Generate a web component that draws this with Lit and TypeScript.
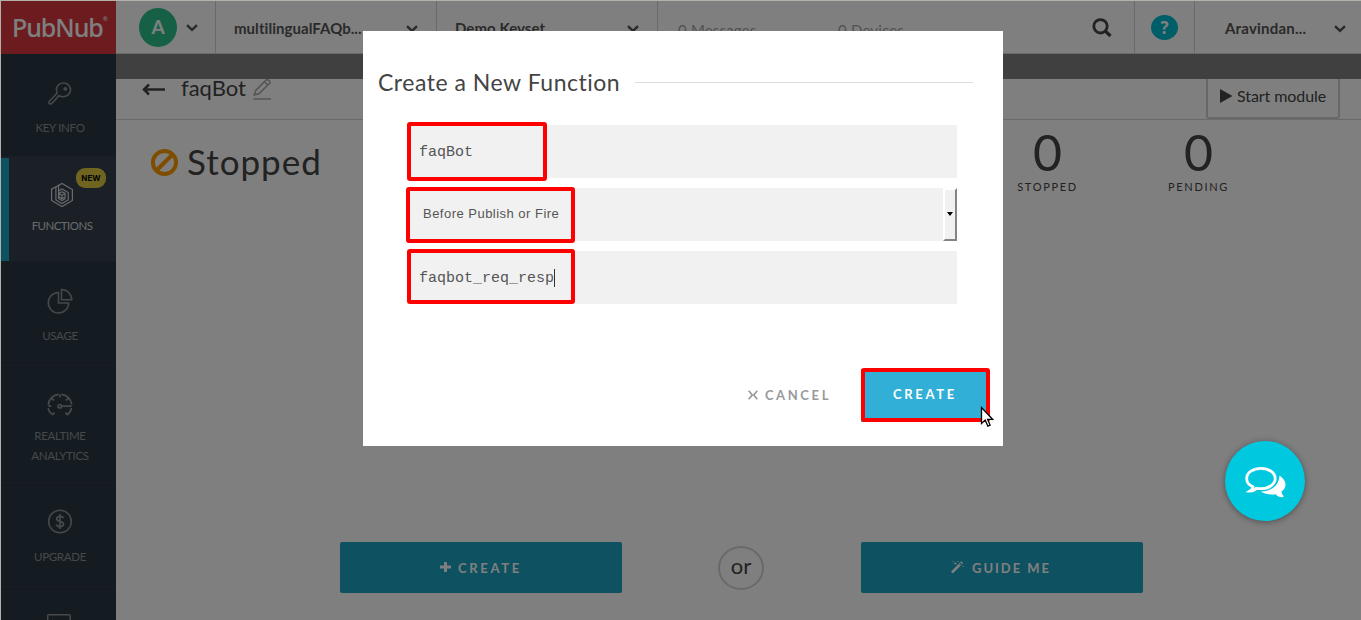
import { LitElement, html, svg, css } from "lit";
import { customElement, property } from "lit/decorators.js";

const icons: Record<string, unknown> = {
  key: svg`<svg width="26" height="26" viewBox="0 0 26 26" fill="none" stroke="currentColor" stroke-width="1.6" stroke-linejoin="round"><path d="M12 14.600 5 22.300c-.8.900-3.500 1.200-3.100-.9l.1-.7L10.100 12C8.800 8.600 9.600 5.600 11.800 3.700c3.200-2.500 7.700-2.100 10.100.7 2.400 2.900 2.100 7.100-.6 9.300-2.500 2-6.400 2.500-9.300.9z"/><circle cx="18.300" cy="7.800" r="1.100" fill="currentColor"/></svg>`,
  functions: svg`<svg width="26" height="26" viewBox="0 0 26 26" fill="none" stroke="currentColor" stroke-width="1.200"><path d="M9.600 3.300 2.600 7.200v11.300L13 24.500l10.400-6v-11L13 1.400 9.600 3.400v5.800"/><path d="M6.900 5v12.900L13 21.500l6.200-3.600v-7.400L13 7l-3.400 2v7.500L13 18.500l3.800-2.200"/><path d="M13 9.700 9.900 11.400v3.500L13 16.700l3.100-1.800v-3.500zM9.900 11.400 13 13.200l3.100-1.800M13 13.200v3.500"/></svg>`,
  usage: svg`<svg width="26" height="26" viewBox="0 0 26 26" fill="none" stroke="currentColor" stroke-width="1.500"><path d="M11.500 4.600A10.200 10.200 0 1 0 21.700 15H11.500z"/><path d="M14.500 1.500v10.200h10.200A10.200 10.200 0 0 0 14.500 1.500z"/></svg>`,
  gauge: svg`<svg width="26" height="26" viewBox="0 0 26 26" fill="none" stroke="currentColor" stroke-width="1.700"><path d="M5.800 22.700 7.500 20.400M5.800 22.700C3 21 1.500 18.500 1.300 16M1.300 13C1.700 7.300 6 2.800 11.700 2.300M14.300 2.300C20 2.800 24.200 7.200 24.700 12.500M24.500 16c-.5 3-2 5.100-4.300 6.700L18.500 20.400M1.300 14.200h3M13 2.500v3M4.800 6.300 7 8.500M21.200 6.300 19 8.500M14.500 14.200h10.200"/><circle cx="12.800" cy="14.200" r="1.700"/></svg>`,
  dollar: svg`<svg width="26" height="26" viewBox="0 0 26 26" fill="none" stroke="currentColor" stroke-width="1.500"><circle cx="13" cy="12.500" r="11.300"/><path d="M16.500 9.200C16 8 14.800 7.300 13 7.300c-2 0-3.300.9-3.300 2.500 0 3.700 6.800 1.700 6.800 5.300 0 1.600-1.500 2.600-3.500 2.600s-3.400-.9-3.700-2.400M13 5.100v14.800" stroke-width="1.700"/></svg>`,
  terminal: svg`<svg width="26" height="26" viewBox="0 0 26 26" fill="none" stroke="currentColor" stroke-width="1.500"><rect x=".7" y="1.700" width="22.500" height="20" rx="1"/><path d="m5 7 4 3.500L5 14"/></svg>`,
  chevron: svg`<svg width="12" height="8" viewBox="0 0 12 8" fill="none" stroke="currentColor" stroke-width="2.500"><path d="m1 1.200 5 4.700 5-4.700"/></svg>`,
  search: svg`<svg width="20" height="20" viewBox="0 0 20 20" fill="none" stroke="currentColor" stroke-width="2.800"><circle cx="8.500" cy="8.300" r="6.700"/><path d="m13.200 13 5.300 5" stroke-width="3.300"/></svg>`,
  back: svg`<svg width="24" height="14" viewBox="0 0 24 14" fill="none" stroke="currentColor" stroke-width="2.500"><path d="M23 7.500H2M7 2.500 2 7.500 7 12.500"/></svg>`,
  pencil: svg`<svg width="19" height="22" viewBox="0 0 19 22" fill="none" stroke="currentColor" stroke-width="1.500"><path d="M1.200 16 2.700 11.500 13.200.9c1.200-.9 4.800 1.500 3.700 3.200L5.900 14.800zM11.400 2.700l3.700 3.600"/><path d="M.5 20h17.500"/></svg>`,
  ban: svg`<svg width="28" height="28" viewBox="0 0 28 28" fill="none" stroke="currentColor" stroke-width="4"><circle cx="14.500" cy="13.500" r="11.600"/><path d="M6.500 21.500 22.500 5.500"/></svg>`,
  play: svg`<svg width="13" height="14" viewBox="0 0 13 14" fill="currentColor"><path d="M0 0 12.500 7 0 14z"/></svg>`,
  plus: svg`<svg width="11" height="11" viewBox="0 0 11 11" fill="currentColor"><path d="M4 0h3v3.500h4v3H7V10H4V6.500H0v-3h4z"/></svg>`,
  wand: svg`<svg width="13" height="13" viewBox="0 0 13 13" fill="currentColor"><path d="M.3 10.200 9.800.7c.6-.6 2.600 1.300 2 1.900L2.400 12.100c-.7.700-2.800-1.200-2.100-1.900z"/><path d="m8.300 3.600.8.800 1.800-1.800-.8-.8z" fill="#1ca2c2"/><path d="M4.300.7l.5 1.200 1.200.5-1.200.5-.5 1.200-.5-1.200-1.200-.5 1.200-.5zM1.500.3h1v1h-1zM6.500.1h1v1h-1zM11.700 5h1v1h-1z"/></svg>`,
  cross: svg`<svg width="10" height="10" viewBox="0 0 10 10" fill="none" stroke="currentColor" stroke-width="1.700"><path d="M.7.700 3.700 4.300v1.400L.7 9.300M9.300.7 6.300 4.300v1.400l3 3.600M3.500 5h3"/></svg>`,
  chats: svg`<svg width="42" height="34" viewBox="0 0 42 34"><path d="M35.500 9.500c3.600 2.500 6 5.500 6 9 0 3-1.500 5.400-4.100 7 .4 2.200 1.300 3.400 2.300 4.700-1 2.500-6.300.3-8-2-5.500.9-11-.2-15-2.700 11-.3 18.600-6.500 18.800-16z" fill="#fff"/><path d="M17 2.300C9.300 2.300 2.700 6.700 2.700 12.500c0 3.800 2.500 6.800 6.300 8.400-.3 1.700-1.500 3-3.300 4.200 2.300.1 5-1 6.500-2.800 1.500.3 3 .4 4.800.4 7.900 0 14.200-4.500 14.200-10.200S24.900 2.300 17 2.300z" fill="none" stroke="#fff" stroke-width="2.800"/></svg>`,
};

@customElement("side-item")
class SideItem extends LitElement {
  @property() icon = "";
  @property() label = "";
  @property({ type: Boolean, reflect: true }) active = false;
  @property({ type: Boolean, reflect: true }) first = false;
  @property({ type: Boolean, reflect: true }) tall = false;
  static styles = css`
    :host { display: block; height: 104px; flex: none; box-sizing: border-box; border-bottom: 1px solid #303d48; color: #8e9193; text-align: center; font-size: 11.500px; line-height: 20px; padding: 27px 0 0 3px; position: relative; }
    :host([first]) { height: 103px; }
    :host([tall]) { height: 117px; }
    :host([active]) { height: 105px; background: #363f4d; padding: 25px 0 0 7px; color: #d4d6d8; }
    :host([active])::before { content: ""; position: absolute; left: 0; top: 1px; bottom: 0; width: 8px; background: #1ca2c2; }
    svg { display: block; margin: 0 auto; }
    .label { margin-top: 12px; white-space: pre-line; letter-spacing: -0.300px; }
    :host(:not([active]):not([first]):not([tall])) { padding-top: 26px; }
    :host([first]) .label { margin-top: 11px; }
    :host([tall]) { padding-top: 26px; }
    :host([tall]) .label { margin-top: 8px; }
    :host([active]) .label { margin-top: 8px; letter-spacing: -0.550px; }
    .tag { position: absolute; right: 10px; top: 11px; width: 30px; height: 20px; border-radius: 9px; background: #dfcb42; color: #000; font: 700 8px/20px Inter, sans-serif; }
  `;
  render() {
    return html`${icons[this.icon]}<div class="label">${this.label}</div>
      ${this.active ? html`<span class="tag">NEW</span>` : ""}`;
  }
}

@customElement("app-root")
class AppRoot extends LitElement {
  static styles = css`
    :host { display: block; position: relative; box-sizing: border-box; width: 1361px; height: 620px; overflow: hidden; padding: 1px 0 0 1px; background: #b4b1aa; font-family: Lato, "Open Sans", sans-serif; color: #444; }
    * { box-sizing: border-box; }
    svg { display: block; flex: none; }
    .page { display: grid; grid-template-columns: 115px 1fr; grid-template-rows: 53px 1fr; height: 619px; background: #fff; overflow: hidden; }
    .logo { background: #d8363e; color: #fff; display: flex; padding: 10px 0 0 11px; font: 500 25px/32px "Noto Sans", sans-serif; letter-spacing: -1.050px; white-space: nowrap; }
    .logo sup { font-size: 6px; line-height: 17px; letter-spacing: 0; }
    .side { background: #293843; display: flex; flex-direction: column; overflow: hidden; }
    .top { display: flex; border-bottom: 1px solid #d4d4d4; color: #555; font-size: 15px; font-weight: 700; letter-spacing: 0.050px; }
    .cell { display: flex; align-items: center; border-right: 1px solid #d4d4d4; white-space: nowrap; }
    .cell .grow { flex: 1; }
    .cell svg { color: #555; margin-top: 2px; }
    .c1 { width: 100px; padding-left: 23px; gap: 9px; }
    .avatar { width: 38px; height: 39px; border-radius: 50%; background: #2dc38d; color: #fff; font: 700 19px/38px Lato, sans-serif; text-align: center; }
    .c1 svg { margin-top: 1px; }
    .c2, .c3 { width: 221px; padding: 2px 18px 0; }
    .c4 { width: 477px; font-weight: 400; color: #a5a5a5; padding: 6px 22px 0 20px; letter-spacing: 0.180px; }
    .c4 span { width: 160px; }
    .c4 svg { color: #444; margin: -5px 0 0 auto; }
    .c5 { width: 60px; justify-content: center; }
    .help { width: 27px; height: 25px; border-radius: 50%; background: #00bdd0; color: #fff; font: 700 17px/25px "Open Sans", sans-serif; text-align: center; margin-top: 1px; }
    .c6 { flex: 1; padding: 2px 15px 0 30px; border: 0; letter-spacing: 0.200px; }
    .main { display: flex; flex-direction: column; }
    .band { height: 25px; background: #808080; flex: none; }
    .bar { height: 41px; border-bottom: 1px solid #d4d4d4; display: flex; padding: 0 21px 0 26px; flex: none; }
    .bar .back { margin-top: 3px; color: #444; }
    .bar .name { font-size: 22px; line-height: 28px; margin: -5px 0 0 15px; }
    .bar .pen { margin: 0 0 0 7px; color: #a8a8a8; }
    .start { margin-left: auto; width: 134px; height: 40px; border: 2px solid #d0d0d0; border-top: 0; border-radius: 0 0 3px 3px; display: flex; padding: 9px 0 0 12px; gap: 4px; font-size: 16px; line-height: 16px; white-space: nowrap; letter-spacing: -0.080px; }
    .start svg { margin-top: 1px; }
    .summary { display: flex; padding: 6px 87px 0 34px; height: 90px; flex: none; }
    .state { display: flex; font-size: 35px; line-height: 70px; gap: 9px; letter-spacing: 1px; }
    .state svg { color: #ff9b00; margin-top: 23px; }
    .counts { margin-left: auto; display: flex; }
    .count { width: 151px; text-align: center; }
    .count .n { font-size: 50px; line-height: 52px; }
    .count .t { font-size: 11px; line-height: 16px; margin-top: 1px; letter-spacing: 1.700px; }
    .actions { display: flex; margin: 332px 0 0 224px; align-items: center; height: 51px; }
    .btn { width: 282px; height: 51px; background: #1ca2c2; border-radius: 2px; color: #fff; display: flex; align-items: center; justify-content: center; gap: 7px; font-size: 13px; font-weight: 700; letter-spacing: 2.700px; padding-top: 1px; }
    .btn svg { margin-top: -1px; }
    .guide { letter-spacing: 1.950px; gap: 8px; padding-right: 2px; }
    .or { width: 46px; height: 44px; border: 2px solid #d3d3d3; border-radius: 50%; margin: 0 97px 0 96px; font-size: 22px; line-height: 36px; text-align: center; }
    .shade { position: absolute; inset: 1px 0 0 1px; background: rgba(0, 0, 0, .5); }
    .modal { position: absolute; left: 363px; top: 31px; width: 640px; height: 415px; background: #fff; padding: 37px 30px 0 15px; }
    .title { display: flex; align-items: center; height: 28px; font-size: 23px; line-height: 28px; gap: 15px; letter-spacing: 0.520px; white-space: nowrap; }
    .title i { flex: 1; height: 1px; background: #dcdcdc; margin-top: 1px; }
    .form { display: flex; flex-direction: column; gap: 10px; margin: 29px 16px 0 29px; }
    .field { height: 53px; background: #f1f1f1; padding: 2px 0 0 12px; font: 15px/50px "Liberation Mono", monospace; color: #555; display: flex; align-items: center; position: relative; }
    .select { font: 13px/50px "Liberation Sans", sans-serif; letter-spacing: 0.480px; padding: 0 0 0 16px; }
    .select .text { margin-top: -2px; }
    .arrow { margin-left: auto; width: 14px; height: 53px; border: 2px solid #fff; border-right-color: #858585; border-bottom-color: #858585; display: flex; align-items: center; justify-content: center; }
    .arrow i { border: 3.500px solid transparent; border-top: 4px solid #000; border-bottom: 0; margin-top: -2px; }
    .caret { width: 1px; height: 18px; background: #333; margin-top: -2px; }
    .foot { display: flex; justify-content: flex-end; align-items: center; margin: 65px -16px 0 0; }
    .cancel { display: flex; align-items: center; gap: 7px; color: #999; font-size: 13px; font-weight: 700; letter-spacing: 2.600px; margin: -2px 30px 0 0; }
    .create { width: 128px; height: 53px; background: #31afd7; color: #fff; font-size: 13px; line-height: 50px; font-weight: 700; letter-spacing: 2.700px; text-align: center; }
    .mark { position: absolute; border: 4px solid #f00; border-radius: 3px; }
    .m1 { left: 407px; top: 122px; width: 140px; height: 59px; }
    .m2 { left: 406px; top: 187px; width: 169px; height: 56px; }
    .m3 { left: 407px; top: 249px; width: 168px; height: 55px; }
    .m4 { left: 861px; top: 368px; width: 129px; height: 54px; }
    .cursor { position: absolute; left: 980px; top: 406px; }
    .chat { position: absolute; left: 1225px; top: 441px; width: 80px; height: 80px; border-radius: 50%; background: #00c8df; box-shadow: 0 1px 6px rgba(0, 0, 0, .4); padding: 25px 0 0 19px; }
  `;
  render() {
    return html`
      <div class="page">
        <div class="logo">PubNub<sup>®</sup></div>
        <header class="top">
          <div class="cell c1"><span class="avatar">A</span>${icons.chevron}</div>
          <div class="cell c2"><span class="grow">multilingualFAQb...</span>${icons.chevron}</div>
          <div class="cell c3"><span class="grow">Demo Keyset</span>${icons.chevron}</div>
          <div class="cell c4"><span>0 Messages</span><span>0 Devices</span>${icons.search}</div>
          <div class="cell c5"><span class="help">?</span></div>
          <div class="cell c6"><span class="grow">Aravindan...</span>${icons.chevron}</div>
        </header>
        <nav class="side">
          <side-item icon="key" label="KEY INFO" first></side-item>
          <side-item icon="functions" label="FUNCTIONS" active></side-item>
          <side-item icon="usage" label="USAGE"></side-item>
          <side-item icon="gauge" label=${"REALTIME\nANALYTICS"} tall></side-item>
          <side-item icon="dollar" label="UPGRADE"></side-item>
          <side-item icon="terminal"></side-item>
        </nav>
        <main class="main">
          <div class="band"></div>
          <div class="bar">
            <span class="back">${icons.back}</span><span class="name">faqBot</span><span class="pen">${icons.pencil}</span>
            <span class="start">${icons.play}<span>Start module</span></span>
          </div>
          <div class="summary">
            <div class="state">${icons.ban}<span>Stopped</span></div>
            <div class="counts">
              <div class="count"><div class="n">0</div><div class="t">STOPPED</div></div>
              <div class="count"><div class="n">0</div><div class="t">PENDING</div></div>
            </div>
          </div>
          <div class="actions">
            <div class="btn">${icons.plus}<span>CREATE</span></div>
            <div class="or">or</div>
            <div class="btn guide">${icons.wand}<span>GUIDE ME</span></div>
          </div>
        </main>
      </div>
      <div class="shade"></div>
      <section class="modal">
        <div class="title"><span>Create a New Function</span><i></i></div>
        <div class="form">
          <div class="field">faqBot</div>
          <div class="field select"><span class="text">Before Publish or Fire</span><span class="arrow"><i></i></span></div>
          <div class="field">faqbot_req_resp<span class="caret"></span></div>
        </div>
        <div class="foot"><span class="cancel">${icons.cross}<span>CANCEL</span></span><span class="create">CREATE</span></div>
      </section>
      <div class="mark m1"></div><div class="mark m2"></div><div class="mark m3"></div><div class="mark m4"></div>
      <svg class="cursor" width="14" height="22" viewBox="0 0 14 22"><path d="M1.500 1.500v16l3.700-3.400 2.600 6 2.300-1-2.500-5.800h5z" fill="#fff" stroke="#000" stroke-width="1.300"/></svg>
      <div class="chat">${icons.chats}</div>
    `;
  }
}
